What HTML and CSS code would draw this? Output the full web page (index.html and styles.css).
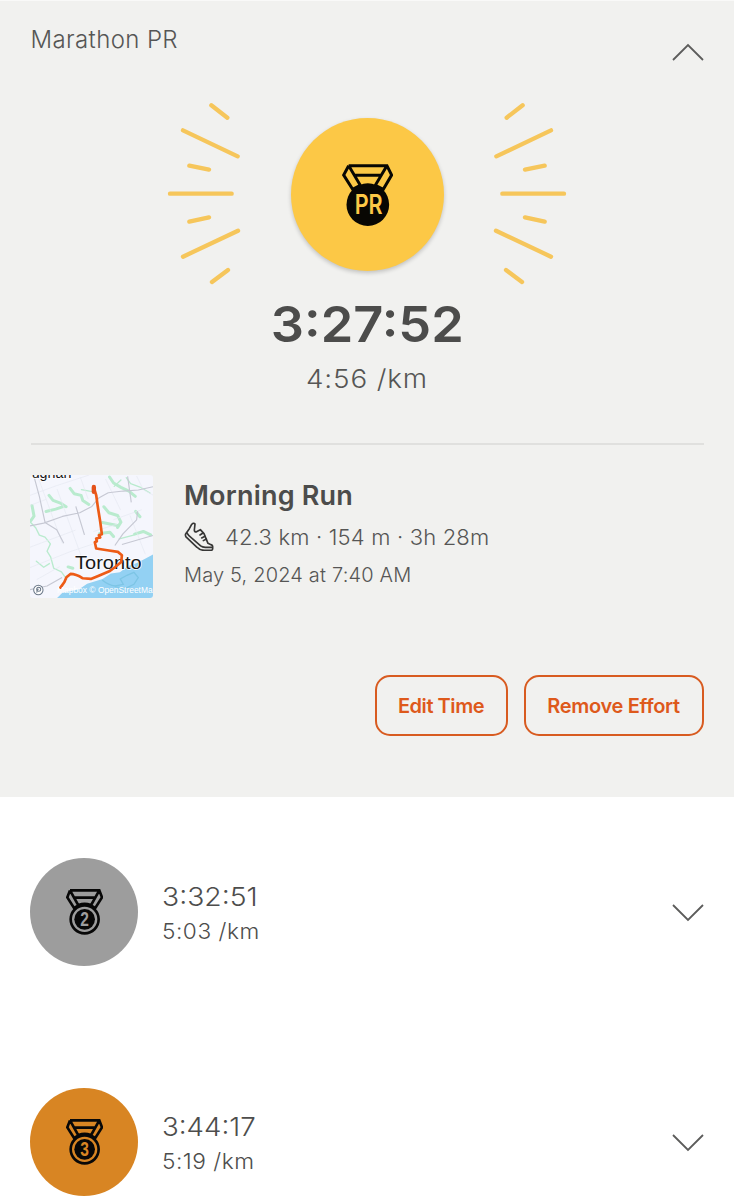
FILE: index.html
```html
<!DOCTYPE html>
<html lang="en">
<head>
<meta charset="utf-8">
<title>Marathon PR</title>
<link rel="stylesheet" href="styles.css">
</head>
<body>
<svg class="defs" width="0" height="0">
  <symbol id="rays" viewBox="51 36 222 549">
    <path d="M184 46L232 83M99 121L263 199M118 227L177 239M60 311H245M118 395L177 382M99 500L264 422M186 576L234 540"/>
  </symbol>
  <symbol id="strap" viewBox="0 0 112 140">
    <path d="M12 4H100L108 25L88 57L75 49L100 4M12 4L4 25L24 57L37 49L12 4M25 26H87M38 48Q56 41 74 48"/>
  </symbol>
</svg>
<main>
  <section class="panel">
    <header class="head">
      <h1 class="title">Marathon PR</h1>
      <svg class="chevron" viewBox="0 0 32 18"><path d="M1 17L16 2L31 17"/></svg>
    </header>
    <div class="hero">
      <svg class="rays"><use href="#rays"/></svg>
      <div class="gold">
        <svg class="pr" viewBox="66 42 154 188">
          <path class="pr-strap" d="M86 47H201L215 75L190 118L166 106L199 50M86 47L71 75L98 118L121 106L88 50M103 76H184"/>
          <circle cx="143.500" cy="164" r="64"/>
          <text x="146" y="193" textLength="84" lengthAdjust="spacingAndGlyphs">PR</text>
        </svg>
      </div>
      <svg class="rays flip"><use href="#rays"/></svg>
    </div>
    <div class="time"><span>3:27:52</span></div>
    <div class="pace"><span>4:56 /km</span></div>
    <article class="activity">
      <svg class="map" viewBox="31 30 368 368">
        <rect x="31" y="30" width="368" height="368" fill="#f5f6fd"/>
        <path d="M399 268L374 281L349 294L325 302L300 321L273 325L248 341L202 355L178 372L128 382L112 398H399Z" fill="#93d1f3"/>
        <path d="M247 344Q266 360 286 362L310 357L301 341L321 330L342 321L355 337L342 357L317 369L286 364" fill="none" stroke="#7dc5e5" stroke-width="4"/>
        <g fill="none" stroke="#b9ebce" stroke-linecap="round" stroke-linejoin="round">
          <path stroke-width="9" d="M151 70L163 86L184 91L189 106L207 118M269 36L281 54L303 67L327 78L346 94M88 91L100 106L124 115L139 125M79 139L108 132L132 124M252 125L267 143L293 151L303 171L293 187M347 139L360 155M344 207L370 199L392 209M37 121L43 153L33 167M239 205L270 201L281 214M248 172L292 181M145 305L159 309"/>
          <path stroke-width="4" d="M33 172L48 188L59 210L76 216L92 236L82 258L93 276L102 309L125 320L141 342M319 38L332 56L360 66L390 84M185 74L217 80M303 45L283 64M50 288L72 306L89 295M298 221L341 210"/>
        </g>
        <g fill="none" stroke="#e6e8f1" stroke-width="2">
          <path d="M31 91L110 62L208 30M31 246L167 195M53 31L128 235M112 72L186 278M182 38L205 102M280 164L365 134M330 151L376 267M31 307L155 258L218 237M51 343L120 304M221 199L292 177M257 42L302 135M350 33L370 74L399 90M31 121L79 103"/>
        </g>
        <g fill="none" stroke="#c6c8d3" stroke-width="3.500" stroke-linejoin="round">
          <path d="M31 182L72 174L128 154L180 143L216 124L238 98L265 83L310 78L355 75L399 65M42 31L59 94L76 172L111 194L132 234M168 124L194 209M323 34L334 112M31 373L82 362L127 337M285 241L309 206L350 164L353 139M306 238L399 211"/>
        </g>
        <g class="map-label">
          <text x="36" y="38" font-size="46" textLength="119" lengthAdjust="spacingAndGlyphs">ughan</text>
          <text x="166" y="312" font-size="57" textLength="199" lengthAdjust="spacingAndGlyphs">Toronto</text>
        </g>
        <path d="M222 67L229 90L234 126L241 169L246 207L237 210L241 217L229 220L231 228L225 231L229 250L262 255L294 260L306 270L304 290L285 306L270 317L235 332L213 341L189 339Q168 326 152 326L140 336L134 350L122 367" fill="none" stroke="#ed5b16" stroke-width="8" stroke-linecap="round" stroke-linejoin="round"/>
        <path d="M222 66V80" fill="none" stroke="#e4521b" stroke-width="13" stroke-linecap="round"/>
        <g fill="#fff" stroke="#6b7889" stroke-width="3"><circle cx="56" cy="374" r="14"/><circle cx="57" cy="372" r="6"/><path d="M51 382L54 372L57 372"/></g>
        <text x="112" y="382" class="credit" textLength="286" lengthAdjust="spacingAndGlyphs">Mapbox © OpenStreetMa</text>
      </svg>
      <div class="info">
        <h2 class="name"><span>Morning Run</span></h2>
        <div class="stats">
          <svg class="shoe" viewBox="41 157 90 88">
            <path d="M57 177L46 193Q44 197 47 202L80 233Q88 242 102 242H121Q128 242 127 234V230Q127 227 122 225L113 221L101 192L90 180L77 187Q72 187 72 181L74 163Q72 160 68 161L64 164Z"/>
            <path d="M49 189Q53 197 66 207L91 229Q96 233 105 233H126M89 196L98 190M94 205L104 200M99 213L108 208"/>
          </svg>
          <span>42.3 km · 154 m · 3h 28m</span>
        </div>
        <div class="date"><span>May 5, 2024 at 7:40 AM</span></div>
      </div>
    </article>
    <div class="actions">
      <button class="btn edit"><span>Edit Time</span></button>
      <button class="btn remove"><span>Remove Effort</span></button>
    </div>
  </section>
  <section class="row">
    <div class="badge silver">
      <svg class="medal" viewBox="0 0 112 140">
        <use href="#strap"/>
        <circle class="ring" cx="56" cy="91" r="42"/><circle cx="56" cy="91" r="31"/>
        <text x="56" y="112" textLength="26" lengthAdjust="spacingAndGlyphs">2</text>
      </svg>
    </div>
    <div class="result"><div class="rtime"><span>3:32:51</span></div><div class="rpace"><span>5:03 /km</span></div></div>
    <svg class="chevron" viewBox="0 0 32 18"><path d="M1 1L16 16L31 1"/></svg>
  </section>
  <section class="row">
    <div class="badge bronze">
      <svg class="medal" viewBox="0 0 112 140">
        <use href="#strap"/>
        <circle class="ring" cx="56" cy="91" r="42"/><circle cx="56" cy="91" r="31"/>
        <text x="56" y="112" textLength="26" lengthAdjust="spacingAndGlyphs">3</text>
      </svg>
    </div>
    <div class="result"><div class="rtime third"><span>3:44:17</span></div><div class="rpace third"><span>5:19 /km</span></div></div>
    <svg class="chevron" viewBox="0 0 32 18"><path d="M1 1L16 16L31 1"/></svg>
  </section>
</main>
</body>
</html>
```
FILE: styles.css
```css
* { box-sizing: border-box; }
html, body { height: 1200px; overflow: hidden; }
body { margin: 0; background: #fff; color: #565655; font-family: Inter, "Liberation Sans", sans-serif; font-weight: 340; }
h1, h2 { margin: 0; font-weight: inherit; }
svg { display: block; flex: none; }
.defs { position: absolute; }
.panel { height: 797px; padding: 0 30.5px; background: #f1f1ef; border-top: 1px solid #f9f9f8; }
.head { display: flex; justify-content: space-between; height: 101px; padding-top: 21px; }
.title { font-size: 24px; line-height: 36px; letter-spacing: 0.38px; white-space: nowrap; }
.chevron { width: 32px; height: 18px; margin-top: 21px; fill: none; stroke: #5c5c5b; stroke-width: 1.8; }
.hero { display: flex; justify-content: center; align-items: center; gap: 49.5px; height: 183px; }
.rays { width: 74px; height: 183px; fill: none; stroke: #f6c65b; stroke-width: 13; stroke-linecap: round; }
.flip { transform: scaleX(-1); }
.gold { width: 153px; height: 153px; border-radius: 50%; background: #fcc846; box-shadow: 0 2px 4px rgba(0, 0, 0, .2); padding: 46px 0 0 51px; margin-top: 2px; }
.pr { width: 51.300px; height: 62.700px; }
.pr-strap { fill: none; stroke: #080703; stroke-width: 9; }
.pr circle { fill: #080703; }
.pr text { font-size: 80px; font-weight: 600; text-anchor: middle; fill: #fcc846; }
.time { height: 70px; padding-top: 7px; text-align: center; font-size: 50px; line-height: 64px; font-weight: 600; color: #4c4c4b; }
.pace { height: 88px; text-align: center; font-size: 26px; line-height: 48px; letter-spacing: .8px; }
.time span, .pace span { display: inline-block; transform: scaleX(1.045); }
.pace span { transform: scaleX(1.07); }
.activity { display: flex; gap: 30.5px; height: 200px; padding-top: 30px; border-top: 2px solid #e0e0de; }
.map { width: 123px; height: 123px; margin-left: -0.5px; border-radius: 3px; }
.map text { font-family: "Liberation Sans", Arial, sans-serif; font-weight: 400; }
.map-label { fill: #171717; stroke: #fff; stroke-width: 4; paint-order: stroke; }
.map .credit { font-size: 26px; fill: #fff; }
.info { padding-left: 0.5px; white-space: nowrap; }
.name { padding-top: 1px; font-size: 27px; line-height: 40px; font-weight: 600; color: #4c4c4b; letter-spacing: 0.2px; }
.stats { display: flex; gap: 11px; height: 42px; line-height: 43px; font-size: 22px; letter-spacing: 0.18px; }
.shoe { width: 30px; height: 29.300px; margin-top: 6px; fill: none; stroke: #373736; stroke-width: 5; stroke-linejoin: round; stroke-linecap: round; }
.date { font-size: 20px; line-height: 34px; letter-spacing: 0.17px; }
.actions { display: flex; justify-content: flex-end; gap: 16px; margin-top: 32px; }
.btn { height: 61px; padding: 1px 0 0; border: 2px solid #d85b20; border-radius: 15px; background: none; color: #de591b; font: 600 20px/57px Inter, "Liberation Sans", sans-serif; letter-spacing: -0.3px; white-space: nowrap; }
.edit { width: 133px; letter-spacing: -0.45px; }
.remove { width: 180px; }
.row { display: flex; height: 230px; padding: 61px 30.5px 0 30px; }
.badge { width: 108px; height: 108px; border-radius: 50%; padding: 31px 35.5px; }
.silver { background: #9d9d9d; color: #9d9d9d; }
.bronze { background: #d88523; color: #d88523; }
.medal { width: 37.300px; height: 46.700px; stroke: #080808; stroke-width: 8; }
#strap path, .ring { fill: none; }
.medal circle { fill: #080808; stroke: none; }
.medal .ring { fill: none; stroke: #080808; }
.medal text { font: 600 58px "Liberation Sans", Arial, sans-serif; text-anchor: middle; fill: currentColor; stroke: none; }
.result { margin-left: 23.5px; padding-top: 21px; flex: 1; color: #4d4d4c; white-space: nowrap; }
.rtime { font-size: 26px; line-height: 36px; }
.rpace { font-size: 22px; line-height: 32px; letter-spacing: .5px; }
.result span { display: inline-block; transform-origin: left; }
.rtime span { transform: scaleX(1.09); }
.rtime.third span { transform: scaleX(1.065); }
.rpace span { transform: scaleX(1.03); }
.row .chevron { margin-top: 45.5px; }
```
